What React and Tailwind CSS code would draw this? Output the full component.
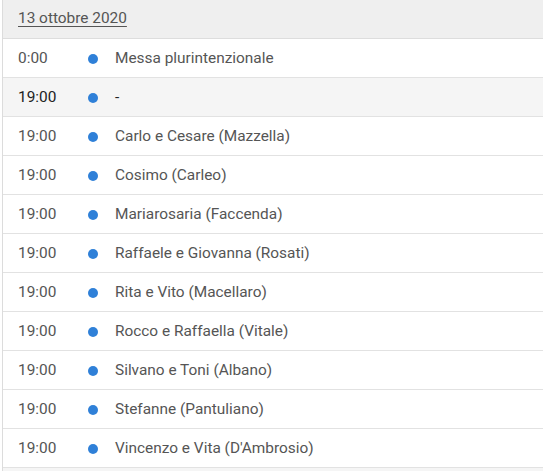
const rows = [
  { time: '0:00', name: 'Messa plurintenzionale' },
  { time: '19:00', name: '-', active: true },
  { time: '19:00', name: 'Carlo e Cesare (Mazzella)' },
  { time: '19:00', name: 'Cosimo (Carleo)' },
  { time: '19:00', name: 'Mariarosaria (Faccenda)' },
  { time: '19:00', name: 'Raffaele e Giovanna (Rosati)' },
  { time: '19:00', name: 'Rita e Vito (Macellaro)' },
  { time: '19:00', name: 'Rocco e Raffaella (Vitale)' },
  { time: '19:00', name: 'Silvano e Toni (Albano)' },
  { time: '19:00', name: 'Stefanne (Pantuliano)' },
  { time: '19:00', name: 'Vincenzo e Vita (D\'Ambrosio)' },
];

export default function App() {
  return (
    <main className="w-[543px] h-[471px] overflow-hidden bg-white pl-[2px] font-['Roboto',sans-serif] text-[15.4px]">
      <div className="border-l border-[#dcdcdc] h-full">
        <div className="h-[39px] bg-[#efefef] border-b border-[#dddddd] flex items-center pl-[15px] pb-[1px]">
          <span className="underline underline-offset-[3px] text-[#555]">13 ottobre 2020</span>
        </div>
        {rows.map((r, i) => (
          <div
            key={i}
            className={
              'h-[39px] border-b border-[#e2e2e2] flex items-center pl-[15px] pt-[2px] ' +
              (r.active ? 'bg-[#f5f5f5] text-[#222]' : 'bg-white text-[#555]')
            }
          >
            <span className="w-[70px]">{r.time}</span>
            <span className="w-[10px] h-[10px] rounded-full bg-[#2f80d8] -mt-[1px]" />
            <span className="ml-[17px]">{r.name}</span>
          </div>
        ))}
        <div className="h-[10px] bg-[#f5f5f5]" />
      </div>
    </main>
  );
}
